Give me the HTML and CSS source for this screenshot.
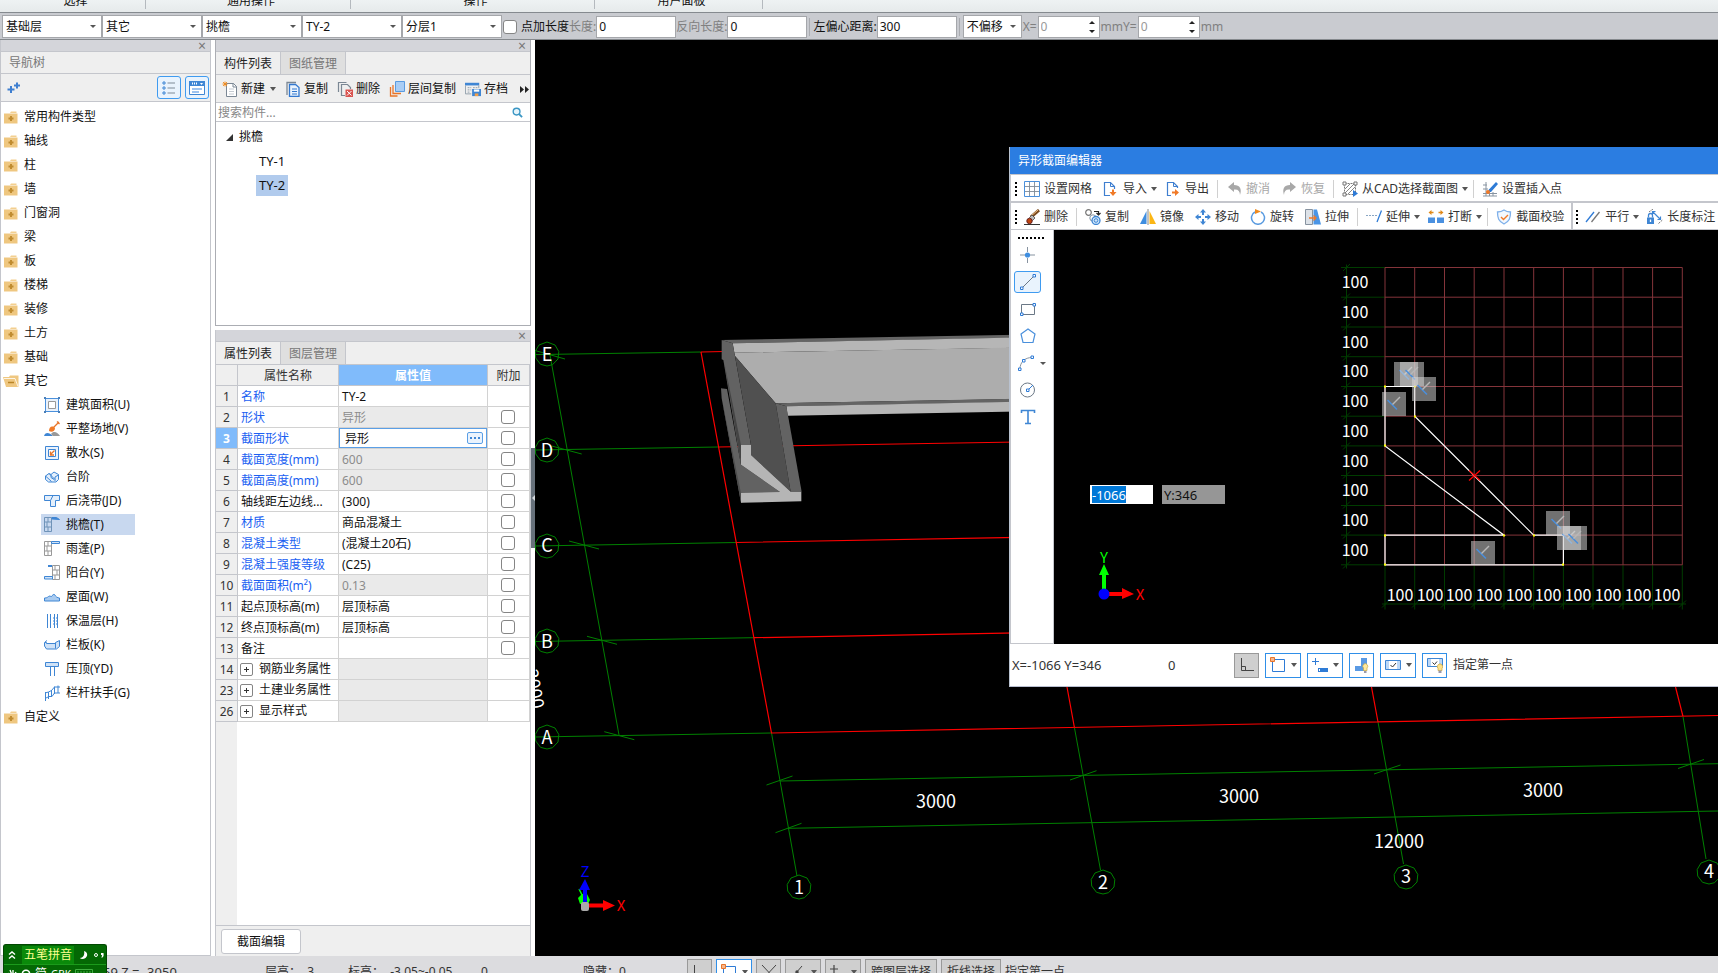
FILE: index.html
```html
<!DOCTYPE html>
<html lang="zh-CN">
<head>
<meta charset="utf-8">
<title>异形截面编辑器</title>
<link rel="stylesheet" href="styles.css">
</head>
<body>
<svg class="sprite" aria-hidden="true">
  <symbol id="folder" viewBox="0 0 16 16"><path d="M8 2.500h5.500v1.500H7z" fill="#f3cf8f"/><path d="M1 4.500h13.500v10H1z" fill="#efc780"/><path d="M8 7v5M5.500 9.500h5" stroke="#c08c30" stroke-width="2"/></symbol>
  <symbol id="folder-open" viewBox="0 0 16 16"><path d="M0 4h6l1-1.500h8.500V14H3z" fill="#efc780"/><path d="M1 5.500h11l3 8" fill="none" stroke="#fff" stroke-width=".8"/><path d="M5 9.500h6" stroke="#b98427" stroke-width="1.500"/></symbol>
  <symbol id="area" viewBox="0 0 16 16"><path d="M1.500 1.500h13v13h-13z" fill="#eaf2fc" stroke="#4a90dc"/><path d="M4.500 4.500h7v7h-7z" fill="#fff" stroke="#999"/><path d="M0 0h2v2H0zM14 0h2v2h-2zM0 14h2v2H0zM14 14h2v2h-2z" fill="#4a7fb8"/></symbol>
  <symbol id="ground" viewBox="0 0 16 16"><path d="M9 7l6-6M13 .500l2.500 2.500" stroke="#e8752a" stroke-width="1.300"/><path d="M5 10c0-4 3-6 6-3 0 3-3 5-6 3z" fill="#f07a28"/><path d="M0 15c1-4 5-4 9 0z" fill="#3f86d4"/><path d="M7 13c3-4 7-1 9 2H9z" fill="#999"/></symbol>
  <symbol id="apron" viewBox="0 0 16 16"><path d="M1.500 1.500h13v13h-13z" fill="#eaf2fc" stroke="#3f86d4"/><path d="M4.500 4.500h7v7h-7z" fill="#fff" stroke="#3f86d4"/><path d="M10.500 5.500L6.500 9.500M6.500 6.500v3.500H10" fill="none" stroke="#e8752a" stroke-width="1.300"/></symbol>
  <symbol id="steps" viewBox="0 0 16 16"><path d="M1.500 7l3.500-2.500 2 1L10 3l4.500 2.500v5L12 13H4.500l-3-2.500z" fill="#e4effb" stroke="#3f86d4"/><path d="M1.500 7l6 5.500M5 4.500l6 6M7 5.500v3l3 2M14.500 6L11 8v4" fill="none" stroke="#3f86d4"/></symbol>
  <symbol id="belt" viewBox="0 0 16 16"><path d="M.500 2.500h15v5h-4v6h-5v-6h-6z" fill="#e4effb" stroke="#3f86d4"/><path d="M9 2.500l-2.500 5" stroke="#3f86d4"/></symbol>
  <symbol id="eave" viewBox="0 0 16 16"><path d="M.500.500h7v14h-7zM4 1v4M1 5h6M3 5v5M1 10h6M4 10v5" fill="none" stroke="#6f93b8"/><path d="M8 .500h4.500l3 2L8 2z" fill="#3f86d4" stroke="#3f86d4"/></symbol>
  <symbol id="canopy" viewBox="0 0 16 16"><path d="M.500.500h7v14h-7zM4 1v4M1 5h6M3 5v5M1 10h6M4 10v5" fill="none" stroke="#999"/><path d="M7.500.500h8v2h-8z" fill="#d2e4f8" stroke="#3f86d4"/></symbol>
  <symbol id="balcony" viewBox="0 0 16 16"><path d="M8.500.500h7v14h-7zM11 1v4M8 5h7M13 5v5M8 10h7M11 10v5" fill="none" stroke="#999"/><path d="M4 0h4v2H4z" fill="#3f86d4"/><path d="M.500 11.500h8v2.500h-8z" fill="#d2e4f8" stroke="#3f86d4"/></symbol>
  <symbol id="roof" viewBox="0 0 16 16"><path d="M.500 12v-3c3 0 3-1 4-1.500 1-1 2 0 3 0 1-1.500 2-2.500 3-2 1 2 3 3.500 5 3.500v3z" fill="#a9cbf0" stroke="#3f86d4"/></symbol>
  <symbol id="insul" viewBox="0 0 16 16"><path d="M3.500 1v14M6.500 1v14M10.500 1v14M13.500 1v14" stroke="#3f86d4"/><path d="M3 5h11M3 8h11M3 11h11" stroke="#3f86d4" stroke-dasharray="1 2"/></symbol>
  <symbol id="slab" viewBox="0 0 16 16"><path d="M.500 5.500h2v1h9v-1l4-2v6l-3 2.500H2.500L.500 9z" fill="#cfe2f7" stroke="#3f86d4"/><path d="M11.500 6v5.500M1 5l2-1.500" stroke="#3f86d4"/></symbol>
  <symbol id="coping" viewBox="0 0 16 16"><path d="M1.500 1.500h13v4h-13z" fill="#cfe2f7" stroke="#3f86d4"/><path d="M6.500 5.500V15M10.500 5.500V15" stroke="#3f86d4"/></symbol>
  <symbol id="rail" viewBox="0 0 16 16"><path d="M1.500 16V7M4.500 14V7M7.500 12V5M10.500 9V1.500M14 8V.500M1 8l3.500-1 3-1.500 3-3.500H16M1 13.500l4-2h3L10.500 8H16" fill="none" stroke="#3f86d4"/></symbol>
  <symbol id="new" viewBox="0 0 16 16"><path d="M4.500 2.500h7l3 3v10h-10z" fill="#fff" stroke="#7b8794"/><path d="M11 2v4h4" fill="none" stroke="#7b8794"/><path d="M7 8h5M7 10.500h5M7 13h5" stroke="#c5cbd2"/><path d="M3 .500v5M.500 3h5M1 1l4 4M5 1L1 5" stroke="#f08a1c" stroke-width=".9"/></symbol>
  <symbol id="copy" viewBox="0 0 16 16"><path d="M2 14V1.500h9" fill="none" stroke="#7b8794" stroke-width="1.300"/><path d="M4.500 3.500h6l3.500 3v9H4.500z" fill="#eaf3fd" stroke="#3378cf" stroke-width="1.300"/><path d="M7 8h5M7 10.500h5M7 13h5" stroke="#3378cf"/></symbol>
  <symbol id="del" viewBox="0 0 16 16"><path d="M1.500 11V1.500h8M8 14.500H4.500v-11h6l3 3V8" fill="none" stroke="#7b8794" stroke-width="1.200"/><path d="M8.500 8.500H16V16H8.500z" fill="#d9534f"/><path d="M10 10l4.500 4.500M14.500 10L10 14.500" stroke="#fff"/></symbol>
  <symbol id="layers" viewBox="0 0 16 16"><path d="M1.500 6v9h7M4 4v8.500h8" fill="none" stroke="#e8752a" stroke-width="1.300"/><path d="M6.500.500h9v10h-9z" fill="#a9cdf5" stroke="#5a9be0"/></symbol>
  <symbol id="save" viewBox="0 0 18 16"><path d="M0 1h16v3H0z" fill="#3f86d4"/><path d="M.500 4v9.500H7M15.500 4v3" fill="none" stroke="#8a98a6"/><path d="M3 6.500h4M3 9h4M3 11.500h3M9 6.500h5" stroke="#8a98a6" stroke-dasharray="2 1"/><path d="M8 8h10v8H8z" fill="#3f86d4"/><path d="M10 8.500h6V11h-6z" fill="#fff"/><path d="M11 13h4v3h-4z" fill="#f3a04a"/></symbol>
  <symbol id="grid" viewBox="0 0 16 16"><path d="M.500.500h15v15H.500z" fill="#fff" stroke="#4a90dc"/><path d="M5.500 1v14M10.500 1v14M1 5.500h14M1 10.500h14" stroke="#7f8b97" stroke-width=".9"/></symbol>
  <symbol id="import" viewBox="0 0 16 16"><path d="M7 14.500H1.500v-13h6l4 4V8" fill="none" stroke="#3f7fd0" stroke-width="1.200"/><path d="M7.500 1.500v4h4" fill="none" stroke="#3f7fd0"/><path d="M9 8.500h2V11h2.500L10 15l-3.500-4H9z" fill="#f07a28"/></symbol>
  <symbol id="export" viewBox="0 0 16 16"><path d="M6 14.500H2.500v-13h6l4 4V7" fill="none" stroke="#3f7fd0" stroke-width="1.200"/><path d="M8.500 1.500v4h4" fill="none" stroke="#3f7fd0"/><path d="M7 10.500h3V8l4 3.500-4 3.500v-2.500H7z" fill="#f07a28"/></symbol>
  <symbol id="undo" viewBox="0 0 16 16"><path d="M2 6l6-5v3c6 0 8 4 6 10 0-4-2-6-6-5.500V11z" fill="#a8a8a8"/></symbol>
  <symbol id="redo" viewBox="0 0 16 16"><path d="M15 6L9 1v3C3 4 1 8 3 14c0-4 2-6 6-5.500V11z" fill="#a8a8a8"/></symbol>
  <symbol id="cad" viewBox="0 0 16 16"><path d="M2.500 2.500h11v11h-11z" fill="none" stroke="#777" stroke-dasharray="2 1"/><path d="M3 8l5-5M3 12l9-9M6 13l7-7" stroke="#888"/><path d="M1 1h3v3H1zM12 1h3v3h-3zM1 12h3v3H1z" fill="#fff" stroke="#777"/><path d="M11 9l5 3.500L11 16z" fill="#2e7bd6"/></symbol>
  <symbol id="insert" viewBox="0 0 16 16"><path d="M4 1v14M7.500 8v7M11 11v4M1 4h4M1 8h5M1 12.500h14M1 15h14" stroke="#8793a0"/><path d="M14 1l2 2-7 8H6.500V9z" fill="#2e7bd6"/><circle cx="6" cy="11" r="2" fill="#f07a28"/></symbol>
  <symbol id="erase" viewBox="0 0 16 16"><path d="M0 15.500h16" stroke="#333"/><path d="M15 1L7 8" stroke="#7a4a20" stroke-width="3"/><path d="M14 1L7 7" stroke="#f2c38a"/><path d="M8 6l3 3-2.500 2.500-3-3z" fill="#bbb" stroke="#333" stroke-width=".7"/><circle cx="5.500" cy="12" r="2.700" fill="#c1440e" stroke="#622"/></symbol>
  <symbol id="copy2" viewBox="0 0 16 16"><circle cx="3.500" cy="3.500" r="2.800" fill="none" stroke="#777" stroke-width="1.200"/><circle cx="8" cy="9" r="3.200" fill="#fff" stroke="#8795a3"/><circle cx="11" cy="11.500" r="4" fill="#cfe6fa" stroke="#3f86d4" stroke-width="1.300"/><circle cx="11" cy="11.500" r="1.800" fill="none" stroke="#3f86d4"/><path d="M9 2.500h4.500V6M11.500 4l2 2 2-2" fill="none" stroke="#222" stroke-width="1.200"/></symbol>
  <symbol id="mirror" viewBox="0 0 16 16"><path d="M6.500 2v13H0z" fill="#3f8ee0"/><path d="M9.500 2v13H16z" fill="#fbb615"/><path d="M8 0v16" stroke="#888"/></symbol>
  <symbol id="move" viewBox="0 0 16 16"><path d="M8 0l3 3.500H9V6H7V3.500H5zM8 16l3-3.500H9V10H7v2.500H5zM0 8l3.500-3v2H6v2H3.500v2zM16 8l-3.500-3v2H10v2h2.500v2z" fill="#3f86d4"/></symbol>
  <symbol id="rotate" viewBox="0 0 16 16"><path d="M5 3a6.500 6.500 0 1 0 6 0" fill="none" stroke="#5a9be0" stroke-width="1.500"/><path d="M5 0l6 2.500L5 5z" fill="#f08a1c"/></symbol>
  <symbol id="stretch" viewBox="0 0 16 16"><path d="M.500.500h7v15h-7z" fill="#dde2e8" stroke="#8793a0"/><path d="M8.500.500h3.500l4 15H8.500z" fill="#4a95e6"/><path d="M4 9h7M8.500 6.500L11 9l-2.500 2.500" fill="none" stroke="#f07a28" stroke-width="1.300"/></symbol>
  <symbol id="extend" viewBox="0 0 16 16"><path d="M0 6.500h11" stroke="#8aa6c4" stroke-width="1.200" stroke-dasharray="2 1"/><path d="M15.500 1.500L11 13" stroke="#2e7bd6" stroke-width="1.300"/></symbol>
  <symbol id="break" viewBox="0 0 16 16"><path d="M0 8.500h7V14H0zM9 8.500h7V14H9z" fill="#4a90e0"/><path d="M.500 3.500l3-2.500v5zM15.500 3.500L12.500 1v5z" fill="#e08a1a"/><path d="M3 3.500h2.500M10.500 3.500H13" stroke="#e08a1a" stroke-width="1.500"/></symbol>
  <symbol id="shield" viewBox="0 0 16 16"><path d="M8 1c2 1.500 4 2 6.500 2 0 6-1 9.500-6.500 12C2.500 12.500 1.500 9 1.500 3 4 3 6 2.500 8 1z" fill="#f3f8fe" stroke="#7eb0ea" stroke-width="1.300"/><path d="M5 8l2.500 2.500L12 6" fill="none" stroke="#f07a28" stroke-width="1.400"/></symbol>
  <symbol id="parallel" viewBox="0 0 16 16"><path d="M1 13L9 3" stroke="#2e7bd6" stroke-width="1.300"/><path d="M6.500 13l8-10" stroke="#777" stroke-width="1.300"/></symbol>
  <symbol id="dim" viewBox="0 0 16 16"><path d="M0 8.500h7V15H0z" fill="#3f86d4"/><path d="M1.500 8.500v-2a2 2 0 0 1 4 0v2" fill="none" stroke="#3f86d4" stroke-width="1.300"/><path d="M3.500 10.500V13" stroke="#fff" stroke-width="1.300"/><path d="M2 3l4-3M11.500 14.500l4.500-4" stroke="#777" stroke-dasharray="2 1"/><path d="M6 3l7 7M5.500 5.500v-3h3M13.500 7.500v3h-3" fill="none" stroke="#3f86d4" stroke-width="1.200"/></symbol>
  <symbol id="t-point" viewBox="0 0 16 16"><path d="M7.500 0v5M7.500 11v5M0 8h5M10 8h5" stroke="#8793a0"/><circle cx="7.500" cy="8" r="2.600" fill="#3f8ee0"/></symbol>
  <symbol id="t-line" viewBox="0 0 16 16"><path d="M2.500 13.500l11-11" stroke="#6b7886"/><path d="M.500 13h2.500v2.500H.500zM13 .500h2.500V3H13z" fill="#fff" stroke="#2e7bd6"/></symbol>
  <symbol id="t-rect" viewBox="0 0 16 16"><path d="M1.500 3.500h13v10h-13z" fill="none" stroke="#6b7886"/><path d="M.500 12h2.500v2.500H.500zM13 2.500h2.500V5H13z" fill="#fff" stroke="#2e7bd6"/></symbol>
  <symbol id="t-poly" viewBox="0 0 16 16"><path d="M8 1l7 5-2 8.500H3L1 6z" fill="none" stroke="#4a90dc" stroke-width="1.200"/></symbol>
  <symbol id="t-arc" viewBox="0 0 16 16"><path d="M2 14C2 7 7 2.500 14 2.500" fill="none" stroke="#8793a0"/><path d="M.500 13h2.500v2.500H.500zM13 1h2.500v2.500H13zM4.500 4.500H7V7H4.500z" fill="#fff" stroke="#2e7bd6"/></symbol>
  <symbol id="t-circle" viewBox="0 0 16 16"><circle cx="7.500" cy="8" r="7" fill="none" stroke="#6b7886"/><path d="M8 8l5-5" stroke="#2e7bd6"/><path d="M6.500 7h2.500v2.500H6.500z" fill="#fff" stroke="#2e7bd6"/></symbol>
  <symbol id="t-text" viewBox="0 0 16 16"><path d="M1.500 4V1.500h13V4M8 2v12.500M5 14.500h6" fill="none" stroke="#3f86d4" stroke-width="1.600"/></symbol>
  <symbol id="s-ortho" viewBox="0 0 16 16"><path d="M2.500 1v12.500H15M2.500 9.500h4v4" fill="none" stroke="#444"/></symbol>
  <symbol id="s-snap" viewBox="0 0 16 16"><path d="M2.500 2.500h12v12h-12z" fill="none" stroke="#2e7bd6"/><path d="M.500.500h4v4h-4z" fill="#f6b58a" stroke="#e8752a"/></symbol>
  <symbol id="s-off" viewBox="0 0 16 16"><path d="M3.500 1v7M0 4.500h7" stroke="#2e7bd6"/><path d="M6 11h10v4H6z" fill="#2e7bd6"/><path d="M7 12h1v2H7z" fill="#fff"/></symbol>
  <symbol id="s-bulb" viewBox="0 0 16 16"><path d="M1 9h6V1h6v6h-3v7H1z" fill="#5a9ae4"/><path d="M9.500 11a2.500 2.500 0 1 1 3.500 0v2.500H9.500z" fill="#ffe9a0" stroke="#caa63a" stroke-width=".7"/><path d="M10 14h2.500v2H10z" fill="#99a"/></symbol>
  <symbol id="s-check" viewBox="0 0 16 16"><path d="M.500 3.500h15v9H.500z" fill="#bcd8f7" stroke="#3f86d4"/><path d="M4 4h8v8H4z" fill="#fff"/><path d="M5.500 8l2 2L11 6" fill="none" stroke="#333"/></symbol>
  <symbol id="s-checkb" viewBox="0 0 16 16"><path d="M.500 1.500h15v8H.500z" fill="#bcd8f7" stroke="#3f86d4"/><path d="M4 2h8v7H4z" fill="#fff"/><path d="M5.500 5.500l2 2L10 4.500" fill="none" stroke="#333"/><path d="M11 11.500a2.700 2.700 0 1 1 4 0v2h-4z" fill="#ffe28a" stroke="#caa63a" stroke-width=".7"/><path d="M11.500 13.500h3V16h-3z" fill="#99a"/></symbol>
  <symbol id="s-cross" viewBox="0 0 16 16"><path d="M1 1l7 7.500L15 1M3 15l5-6.500 5 6.500" fill="none" stroke="#444"/></symbol>
  <symbol id="s-brush" viewBox="0 0 16 16"><path d="M2 15l4-6 6-7" fill="none" stroke="#444"/><circle cx="7" cy="8" r="1.700" fill="#444"/></symbol>
  <symbol id="s-plus" viewBox="0 0 16 16"><path d="M4 1v8M0 5h8" stroke="#444" stroke-width="1.200"/></symbol>
  <symbol id="decagon" viewBox="-13 -13 26 26"><path d="M0-12L8-9 11.800-2.500 11 5 5.500 10.700 0 12-6.500 10.300-11.300 4-11.800-2.500-8-9z" fill="none" stroke="#008000"/></symbol>
  <symbol id="perp" viewBox="0 0 24 24"><path d="M0 0h24v24H0z" fill="#d8d8d8" fill-opacity=".52"/><path d="M5.500 8l9.500 9.500" stroke="#4a8fdc" stroke-width="1.500"/><path d="M10.500 12.500L18 5" stroke="#b8b8b8" stroke-width="1.500"/></symbol>
</svg>

<div class="app">
  <header class="ribbon">
    <span class="ribbon-group g1">选择</span><span class="ribbon-group g2">通用操作</span><span class="ribbon-group g3">操作</span><span class="ribbon-group g4">用户面板</span>
  </header>

  <div class="options">
    <span class="combo"><select aria-label="楼层"><option>基础层</option></select></span>
    <span class="combo"><select aria-label="类别"><option>其它</option></select></span>
    <span class="combo"><select aria-label="构件类型"><option>挑檐</option></select></span>
    <span class="combo"><select aria-label="构件"><option>TY-2</option></select></span>
    <span class="combo"><select aria-label="分层"><option>分层1</option></select></span>
    <label class="opt-check"><input class="box" type="checkbox">点加长度</label>
    <label class="dim-label" for="len">长度:</label><input class="field" id="len" value="0">
    <label class="dim-label" for="rlen">反向长度:</label><input class="field" id="rlen" value="0">
    <i class="opt-sep"></i>
    <label for="ecc">左偏心距离:</label><input class="field" id="ecc" value="300">
    <i class="opt-sep"></i>
    <span class="combo combo-small"><select aria-label="偏移"><option>不偏移</option></select></span>
    <label class="dim-label unit" for="ox">X=</label><span class="spin"><input id="ox" type="number" value="0" disabled></span>
    <label class="dim-label unit" for="oy">mmY=</label><span class="spin"><input id="oy" type="number" value="0" disabled></span>
    <span class="dim-label unit">mm</span>
  </div>

  <main class="work">
    <aside class="nav">
      <div class="strip"><button class="close" aria-label="关闭导航树">×</button></div>
      <h2 class="nav-title">导航树</h2>
      <div class="nav-tools">
        <button class="plain" aria-label="展开"><svg class="ic" viewBox="0 0 16 16"><path d="M5 6v7M1.500 9.500h7M11 2.500v6M8 5.500h6" stroke="#3f7fd0" stroke-width="2"/></svg></button>
        <button class="view" aria-label="列表"><svg class="ic" viewBox="0 0 16 16"><path d="M2 2h2v2H2zM2 7h2v2H2zM2 12h2v2H2z" fill="none" stroke="#3f86d4"/><path d="M6.500 3H14M6.500 8H14M6.500 13H14" stroke="#7f8b97"/></svg></button>
        <button class="view" aria-label="面板"><svg class="ic" viewBox="0 0 16 16"><path d="M.500 1.500h15v13H.500z" fill="#fff" stroke="#3f86d4"/><path d="M0 1h16v5H0z" fill="#3f86d4"/><path d="M3 3.500h6" stroke="#fff" stroke-width="2" stroke-dasharray="1 1"/><path d="M11 3h3l-1.500 2z" fill="#fff"/><path d="M3 9h10M3 12h7" stroke="#7fb0ea" stroke-width="1.500"/></svg></button>
      </div>
      <ul class="tree">
        <li><svg class="ic"><use href="#folder"/></svg>常用构件类型</li>
        <li><svg class="ic"><use href="#folder"/></svg>轴线</li>
        <li><svg class="ic"><use href="#folder"/></svg>柱</li>
        <li><svg class="ic"><use href="#folder"/></svg>墙</li>
        <li><svg class="ic"><use href="#folder"/></svg>门窗洞</li>
        <li><svg class="ic"><use href="#folder"/></svg>梁</li>
        <li><svg class="ic"><use href="#folder"/></svg>板</li>
        <li><svg class="ic"><use href="#folder"/></svg>楼梯</li>
        <li><svg class="ic"><use href="#folder"/></svg>装修</li>
        <li><svg class="ic"><use href="#folder"/></svg>土方</li>
        <li><svg class="ic"><use href="#folder"/></svg>基础</li>
        <li><svg class="ic"><use href="#folder-open"/></svg>其它</li>
        <li class="child"><svg class="ic"><use href="#area"/></svg>建筑面积(U)</li>
        <li class="child"><svg class="ic"><use href="#ground"/></svg>平整场地(V)</li>
        <li class="child"><svg class="ic"><use href="#apron"/></svg>散水(S)</li>
        <li class="child"><svg class="ic"><use href="#steps"/></svg>台阶</li>
        <li class="child"><svg class="ic"><use href="#belt"/></svg>后浇带(JD)</li>
        <li class="child current"><svg class="ic"><use href="#eave"/></svg>挑檐(T)</li>
        <li class="child"><svg class="ic"><use href="#canopy"/></svg>雨蓬(P)</li>
        <li class="child"><svg class="ic"><use href="#balcony"/></svg>阳台(Y)</li>
        <li class="child"><svg class="ic"><use href="#roof"/></svg>屋面(W)</li>
        <li class="child"><svg class="ic"><use href="#insul"/></svg>保温层(H)</li>
        <li class="child"><svg class="ic"><use href="#slab"/></svg>栏板(K)</li>
        <li class="child"><svg class="ic"><use href="#coping"/></svg>压顶(YD)</li>
        <li class="child"><svg class="ic"><use href="#rail"/></svg>栏杆扶手(G)</li>
        <li><svg class="ic"><use href="#folder"/></svg>自定义</li>
      </ul>
    </aside>

    <div class="middle">
      <section class="pane parts">
        <div class="strip"><button class="close" aria-label="关闭构件列表">×</button></div>
        <div class="tabs"><button class="tab on">构件列表</button><button class="tab">图纸管理</button></div>
        <div class="part-tools">
          <button><svg class="ic"><use href="#new"/></svg>新建<i class="caret"></i></button>
          <button><svg class="ic"><use href="#copy"/></svg>复制</button>
          <button><svg class="ic"><use href="#del"/></svg>删除</button>
          <button><svg class="ic"><use href="#layers"/></svg>层间复制</button>
          <button><svg class="ic"><use href="#save"/></svg>存档</button>
          <button class="more" aria-label="更多"><svg viewBox="0 0 9 7"><path d="M0 0l4 3.500L0 7zM5 0l4 3.500L5 7z" fill="#222"/></svg></button>
        </div>
        <div class="search"><input aria-label="搜索构件" placeholder="搜索构件..."><svg class="lens" viewBox="0 0 12 12"><circle cx="5" cy="5" r="3.700" fill="#e6f4fb" stroke="#3a96c4" stroke-width="1.500"/><path d="M7.500 7.500L11 11" stroke="#3a96c4" stroke-width="2"/></svg></div>
        <ul class="part-tree">
          <li><svg class="tri" viewBox="0 0 7 7"><path d="M7 0v7H0z" fill="#333"/></svg>挑檐</li>
          <li class="leaf"><span>TY-1</span></li>
          <li class="leaf"><span class="picked">TY-2</span></li>
        </ul>
      </section>

      <section class="pane props">
        <div class="strip"><button class="close" aria-label="关闭属性列表">×</button></div>
        <div class="tabs"><button class="tab on">属性列表</button><button class="tab">图层管理</button></div>
        <div class="prop-body">
          <table>
            <thead><tr><th class="c-no"></th><th class="c-name">属性名称</th><th class="c-val">属性值</th><th class="c-add">附加</th></tr></thead>
            <tbody>
              <tr><th>1</th><td class="link">名称</td><td>TY-2</td><td></td></tr>
              <tr><th>2</th><td class="link">形状</td><td class="off">异形</td><td class="tick"><input class="box" type="checkbox" aria-label="附加 形状"></td></tr>
              <tr class="active"><th>3</th><td class="link">截面形状</td><td class="edit"><div class="editor"><input value="异形" aria-label="截面形状"><button aria-label="编辑截面"><i></i><i></i><i></i></button></div></td><td class="tick"><input class="box" type="checkbox" aria-label="附加 截面形状"></td></tr>
              <tr><th>4</th><td class="link">截面宽度(mm)</td><td class="off">600</td><td class="tick"><input class="box" type="checkbox" aria-label="附加 截面宽度"></td></tr>
              <tr><th>5</th><td class="link">截面高度(mm)</td><td class="off">600</td><td class="tick"><input class="box" type="checkbox" aria-label="附加 截面高度"></td></tr>
              <tr><th>6</th><td>轴线距左边线...</td><td>(300)</td><td class="tick"><input class="box" type="checkbox" aria-label="附加 轴线距左边线"></td></tr>
              <tr><th>7</th><td class="link">材质</td><td>商品混凝土</td><td class="tick"><input class="box" type="checkbox" aria-label="附加 材质"></td></tr>
              <tr><th>8</th><td class="link">混凝土类型</td><td>(混凝土20石)</td><td class="tick"><input class="box" type="checkbox" aria-label="附加 混凝土类型"></td></tr>
              <tr><th>9</th><td class="link">混凝土强度等级</td><td>(C25)</td><td class="tick"><input class="box" type="checkbox" aria-label="附加 混凝土强度等级"></td></tr>
              <tr><th>10</th><td class="link">截面面积(m²)</td><td class="off">0.13</td><td class="tick"><input class="box" type="checkbox" aria-label="附加 截面面积"></td></tr>
              <tr><th>11</th><td>起点顶标高(m)</td><td>层顶标高</td><td class="tick"><input class="box" type="checkbox" aria-label="附加 起点顶标高"></td></tr>
              <tr><th>12</th><td>终点顶标高(m)</td><td>层顶标高</td><td class="tick"><input class="box" type="checkbox" aria-label="附加 终点顶标高"></td></tr>
              <tr><th>13</th><td>备注</td><td></td><td class="tick"><input class="box" type="checkbox" aria-label="附加 备注"></td></tr>
              <tr><th>14</th><td class="group"><button class="exp" aria-label="展开钢筋业务属性"></button>钢筋业务属性</td><td class="off"></td><td></td></tr>
              <tr><th>23</th><td class="group"><button class="exp" aria-label="展开土建业务属性"></button>土建业务属性</td><td class="off"></td><td></td></tr>
              <tr><th>26</th><td class="group"><button class="exp" aria-label="展开显示样式"></button>显示样式</td><td class="off"></td><td></td></tr>
            </tbody>
          </table>
        </div>
        <div class="prop-foot"><button>截面编辑</button></div>
      </section>
    </div>

    <div class="splitter"><button aria-label="折叠面板"><svg viewBox="0 0 3 6"><path d="M3 0v6L0 3z" fill="#d5d9dd"/></svg></button></div>

    <section class="viewport">
      <svg class="scene" viewBox="535 40 1183 916" preserveAspectRatio="xMinYMin slice">
        <g fill="none" stroke="#008000">
          <path d="M535 354.600L701 352M535 450l183-3M535 546l201-3.500M535 641.500l218.500-3.800M535 737l236.500-4"/>
          <path d="M550 355l69 380M535 350.500l30 8.500M551.700 446l30 8M569 541l30 8M587 636.300l30 8M604.300 731.700l30 8"/>
          <path d="M771.500 733L797 876M1074.500 728l26 142M1378 722l25.500 142M1683 716.500L1706 859"/>
          <path d="M780 781l938-17.300M789 828.300L1718 811"/>
          <path d="M766.500 785l26-9M1070 780l26.500-9.300M1374 774l26.500-9M1678 768.500l26-9M775.500 832.700l26-9.400"/>
        </g>
        <path d="M701 352l70.500 381L1718 715.500M701 352l23-.5M718 447l360-6M736 542.500l300-5.500M753.500 637.700L1040 632.500M1067 687l7.500 41M1371.500 687l6.500 35M1675.500 687l7.500 29.500" fill="none" stroke="#f00" stroke-width="1.200"/>
        <g transform="translate(525 320) scale(.33333)">
          <path d="M590 60L1500 44v9L623 70z" fill="#646464"/>
          <path d="M623 70L1500 52v31L628 98z" fill="#b6b6b6"/>
          <path d="M628 98L1500 82v155L752 250 630 108z" fill="#adadad"/>
          <path d="M752 250L1500 236v10L784 259z" fill="#646464"/>
          <path d="M784 259L1500 245v29L788 287z" fill="#b6b6b6"/>
          <path d="M590 60l33 10 55 305h-30v60L595 120l-5-2z" fill="#626262"/>
          <path d="M597 124l51 251v55z" fill="#444"/>
          <path d="M588 205l18 2 42 227 117 82-117 32-58-313z" fill="#626262"/>
          <path d="M590 235l58 285v28z" fill="#4c4c4c"/>
          <path d="M630 108l122 142 45 265-119-110v-30z" fill="#505050"/>
          <path d="M752 250l32 9 46 256h-33z" fill="#636363"/>
          <path d="M648 375h30v30l119 110h32v29l-181 4v-29l117-3-117-82z" fill="#b5b5b5"/>
        </g>
        <use href="#decagon" x="534" y="341" width="26" height="26"/><use href="#decagon" x="534" y="437" width="26" height="26"/><use href="#decagon" x="534" y="533" width="26" height="26"/><use href="#decagon" x="534" y="628" width="26" height="26"/><use href="#decagon" x="534" y="724" width="26" height="26"/>
        <use href="#decagon" x="786" y="874" width="26" height="26"/><use href="#decagon" x="1090" y="869" width="26" height="26"/><use href="#decagon" x="1393" y="864" width="26" height="26"/><use href="#decagon" x="1696" y="859" width="26" height="26"/>
        <g class="cad-text big">
          <text x="547" y="361">E</text><text x="547" y="457">D</text><text x="547" y="552">C</text><text x="547" y="648">B</text><text x="547" y="744">A</text>
          <text x="799" y="894">1</text><text x="1103" y="889">2</text><text x="1406" y="883">3</text><text x="1709" y="878">4</text>
          <text x="936" y="808">3000</text><text x="1239" y="803">3000</text><text x="1543" y="797">3000</text><text x="1399" y="848">12000</text>
          <text transform="translate(528 690) rotate(80)">3000</text>
        </g>
        <path d="M578 898l4-4h5l3 6-2 4h-8z" fill="#0f0"/><path d="M579 889l3 6v5" fill="none" stroke="#0f0" stroke-width="1.500"/><path d="M583 903v-13h-4l6-11 5 11h-3v13z" fill="#00f"/><path d="M589 903.500h14V900l12 5.500-12 5.500v-3.500h-14z" fill="red"/><rect x="581" y="902" width="8" height="9" rx="2" fill="#aaa"/>
        <g class="cad-text axis"><text x="585" y="877" fill="#00f">Z</text><text x="621" y="911" fill="#f00">X</text></g>
      </svg>

      <section class="dialog" role="dialog" aria-label="异形截面编辑器">
        <h2 class="dlg-title">异形截面编辑器</h2>
        <div class="bar">
          <i class="grip"></i>
          <button><svg class="ic"><use href="#grid"/></svg>设置网格</button>
          <button><svg class="ic"><use href="#import"/></svg>导入<i class="caret"></i></button>
          <button><svg class="ic"><use href="#export"/></svg>导出</button>
          <i class="sep"></i>
          <button disabled><svg class="ic"><use href="#undo"/></svg>撤消</button>
          <button disabled><svg class="ic"><use href="#redo"/></svg>恢复</button>
          <i class="sep"></i>
          <button><svg class="ic"><use href="#cad"/></svg>从CAD选择截面图<i class="caret"></i></button>
          <i class="sep"></i>
          <button><svg class="ic"><use href="#insert"/></svg>设置插入点</button>
        </div>
        <div class="bar">
          <i class="grip"></i>
          <button><svg class="ic"><use href="#erase"/></svg>删除</button>
          <i class="sep"></i>
          <button><svg class="ic"><use href="#copy2"/></svg>复制</button>
          <button><svg class="ic"><use href="#mirror"/></svg>镜像</button>
          <button><svg class="ic"><use href="#move"/></svg>移动</button>
          <button><svg class="ic"><use href="#rotate"/></svg>旋转</button>
          <button><svg class="ic"><use href="#stretch"/></svg>拉伸</button>
          <i class="sep"></i>
          <button><svg class="ic"><use href="#extend"/></svg>延伸<i class="caret"></i></button>
          <button><svg class="ic"><use href="#break"/></svg>打断<i class="caret"></i></button>
          <i class="sep"></i>
          <button><svg class="ic"><use href="#shield"/></svg>截面校验</button>
          <i class="bar-end"></i>
          <i class="grip"></i>
          <button><svg class="ic"><use href="#parallel"/></svg>平行<i class="caret"></i></button>
          <button><svg class="ic"><use href="#dim"/></svg>长度标注</button>
        </div>
        <div class="dlg-body">
          <div class="tools">
            <i class="grip-h"></i>
            <button aria-label="点"><svg class="ic"><use href="#t-point"/></svg></button>
            <button class="on" aria-label="直线"><svg class="ic"><use href="#t-line"/></svg></button>
            <button aria-label="矩形"><svg class="ic"><use href="#t-rect"/></svg></button>
            <button aria-label="多边形"><svg class="ic"><use href="#t-poly"/></svg></button>
            <button class="wide" aria-label="弧"><svg class="ic"><use href="#t-arc"/></svg><i class="caret"></i></button>
            <button aria-label="圆"><svg class="ic"><use href="#t-circle"/></svg></button>
            <button aria-label="文字"><svg class="ic"><use href="#t-text"/></svg></button>
          </div>
          <div class="sketch">
            <svg class="scene" viewBox="1054 230 664 414" preserveAspectRatio="xMinYMin slice">
              <g transform="translate(1385 267.500)" fill="none">
                <path d="M-44 0H0M-44 29.700H0M-44 59.500H0M-44 89.200H0M-44 119H0M-44 148.700H0M-44 178.400H0M-44 208H0M-44 238H0M-44 267.600H0M-44 297.300H0M-38.500-3v304M0 297v45M29.700 297v45M59.500 297v45M89.200 297v45M119 297v45M148.700 297v45M178.400 297v45M208 297v45M238 297v45M267.600 297v45M297.300 297v45M-3 336.500h304" stroke="#003c00"/>
                <path d="M-42 3.500l7-7M-42 33l7-7M-42 63l7-7M-42 93l7-7M-42 122l7-7M-42 152l7-7M-42 182l7-7M-42 211l7-7M-42 241l7-7M-42 271l7-7M-42 301l7-7M-3 340l7-7M27 340l7-7M56 340l7-7M86 340l7-7M116 340l7-7M145 340l7-7M175 340l7-7M205 340l7-7M234 340l7-7M264 340l7-7M294 340l7-7" stroke="#003c00"/>
                <path d="M0 0h297.300M0 29.700h297.300M0 59.500h297.300M0 89.200h297.300M0 119h297.300M0 148.700h297.300M0 178.400h297.300M0 208h297.300M0 238h297.300M0 267.600h297.300M0 297.300h297.300M0 0v297.300M29.700 0v297.300M59.500 0v297.300M89.200 0v297.300M119 0v297.300M148.700 0v297.300M178.400 0v297.300M208 0v297.300M238 0v297.300M267.600 0v297.300M297.300 0v297.300" stroke="#84343a"/>
                <path d="M0 119h29.700v29.700l119 119h29.700v29.700H0v-29.700h119L0 178.400z" stroke="#fff" stroke-width="1.200"/>
                <path d="M84 203l11 10M95 203l-11 10" stroke="#f00" stroke-width="1.200"/>
                <path d="M-1 118h2v2h-2zM29 118h2v2h-2zM29 148h2v2h-2zM-1 177h2v2h-2zM-1 267h2v2h-2zM118 267h2v2h-2zM148 267h2v2h-2zM-1 296h2v2h-2zM177 296h2v2h-2z" fill="#ff0"/>
              </g>
              <use href="#perp" x="1394" y="362" width="24" height="24"/><use href="#perp" x="1400" y="362" width="24" height="24"/><use href="#perp" x="1412" y="377" width="24" height="24"/><use href="#perp" x="1382" y="392" width="24" height="24"/><use href="#perp" x="1546" y="511" width="24" height="24"/><use href="#perp" x="1557" y="526" width="24" height="24"/><use href="#perp" x="1563" y="526" width="24" height="24"/><use href="#perp" x="1471" y="541" width="24" height="24"/>
              <g class="cad-text">
                <text x="1355" y="288">100</text><text x="1355" y="318">100</text><text x="1355" y="348">100</text><text x="1355" y="377">100</text><text x="1355" y="407">100</text><text x="1355" y="437">100</text><text x="1355" y="467">100</text><text x="1355" y="496">100</text><text x="1355" y="526">100</text><text x="1355" y="556">100</text>
                <text x="1400" y="601">100</text><text x="1430" y="601">100</text><text x="1459" y="601">100</text><text x="1489" y="601">100</text><text x="1519" y="601">100</text><text x="1548" y="601">100</text><text x="1578" y="601">100</text><text x="1608" y="601">100</text><text x="1638" y="601">100</text><text x="1667" y="601">100</text>
              </g>
              <path d="M1102 593v-18h-3l5-11 5 11h-3v18z" fill="#0f0"/><path d="M1104 592h18v-4l12 6-12 5v-3h-18z" fill="red"/><circle cx="1104" cy="594" r="5.500" fill="#00f"/>
              <g class="cad-text axis"><text x="1104" y="563" fill="#0f0">Y</text><text x="1140" y="600" fill="#f00">X</text></g>
            </svg>
            <div class="coords"><label class="coord-x"><input class="chosen" aria-label="X" value="-1066"></label><input class="coord-y" aria-label="Y" value="Y:346"></div>
          </div>
        </div>
        <footer class="dlg-status">
          <span class="pos">X=-1066 Y=346</span><span class="zero">0</span>
          <button class="pressed" aria-label="正交"><svg class="ic"><use href="#s-ortho"/></svg></button>
          <button aria-label="捕捉"><svg class="ic"><use href="#s-snap"/></svg><i class="caret"></i></button>
          <button aria-label="偏移"><svg class="ic"><use href="#s-off"/></svg><i class="caret"></i></button>
          <button aria-label="提示"><svg class="ic"><use href="#s-bulb"/></svg></button>
          <button aria-label="校验"><svg class="ic"><use href="#s-check"/></svg><i class="caret"></i></button>
          <button aria-label="校验提示"><svg class="ic"><use href="#s-checkb"/></svg></button>
          <span>指定第一点</span>
        </footer>
      </section>
    </section>
  </main>

  <footer class="status">
    <span class="st-pos">59 Z = -3050</span>
    <span class="st-floor">层高：&nbsp; 3</span>
    <span class="st-elev">标高：&nbsp; -3.05~-0.05</span>
    <span class="st-zero">0</span>
    <span class="st-hide">隐藏：0</span>
    <button aria-label="正交"><svg class="ic"><use href="#s-ortho"/></svg></button>
    <button class="on" aria-label="捕捉"><svg class="ic"><use href="#s-snap"/></svg><i class="caret"></i></button>
    <button aria-label="交点"><svg class="ic"><use href="#s-cross"/></svg></button>
    <button aria-label="笔"><svg class="ic"><use href="#s-brush"/></svg><i class="caret"></i></button>
    <button aria-label="加"><svg class="ic"><use href="#s-plus"/></svg><i class="caret"></i></button>
    <button class="txt">跨图层选择</button>
    <button class="txt">折线选择</button>
    <span>指定第一点</span>
  </footer>

  <div class="ime">
    <div class="ime-row">
      <svg class="ime-ic" viewBox="0 0 10 10"><path d="M2 4.500L5 2l3 2.500M2 8.500L5 6l3 2.500" fill="none" stroke="#fff" stroke-width="1.400"/></svg>
      <span class="ime-name">五笔拼音</span>
      <svg class="ime-ic" viewBox="0 0 10 10"><path d="M5 1c5 1 4 8-2 8-1 0-2-1-2-1 3 0 5-3 4-7z" fill="#fff"/></svg>
      <svg class="ime-ic" viewBox="0 0 10 10"><circle cx="2" cy="5" r="1.500" fill="none" stroke="#fff"/><path d="M7 3h2.500c.5 3 0 4-2 5l.5-3H7z" fill="#fff"/></svg>
    </div>
    <div class="ime-row ime-low">
      <svg class="ime-ic" viewBox="0 0 10 10"><path d="M1 4l2 3M3 1l2 5M6 1v5M9 3L7 7M3 6h5v3H4z" fill="#fff" stroke="#fff" stroke-width="1.300"/></svg>
      <svg class="ime-ic" viewBox="0 0 10 10"><circle cx="5" cy="5" r="3.700" fill="none" stroke="#fff" stroke-width="1.500"/></svg>
      <span class="ime-mode">简</span><span class="ime-set">GBK</span>
      <svg class="ime-kb" viewBox="0 0 18 10"><path d="M.500.500h17v9H.500z" fill="none" stroke="#3fae3f"/><path d="M2 3h14M2 5.500h14M2 8h14" stroke="#3fae3f" stroke-dasharray="2 1"/></svg>
    </div>
  </div>
</div>
</body>
</html>
```
FILE: styles.css
```css
* { box-sizing: border-box; }
body { margin: 0; overflow: hidden; font: 12px/16px "Noto Sans", "Noto Sans CJK SC", sans-serif; color: #111; background: #fff; }
button, input, select { font: inherit; color: inherit; }
button { padding: 0; border: 0; background: none; white-space: nowrap; }
ul { list-style: none; margin: 0; padding: 0; }
h2 { margin: 0; font: inherit; }
i { font-style: normal; }
.sprite { display: none; }
.ic { width: 16px; height: 16px; flex: none; display: block; }
.caret { flex: none; width: 0; border: 4px solid transparent; border-top-color: #555; border-bottom: 0; }
.box { appearance: none; width: 14px; height: 14px; margin: 0; flex: none; background: #fff; border: 1px solid #858585; border-radius: 3px; }

.app { position: relative; display: flex; flex-direction: column; height: 100vh; overflow: hidden; }

.ribbon { display: flex; flex: none; height: 13px; background: linear-gradient(#eef2f3, #e6eaeb); border-bottom: 1px solid #858a8f; overflow: hidden; }
.ribbon-group { display: flex; flex: none; justify-content: center; align-items: flex-end; padding-left: 6px; height: 9px; border-right: 1px solid #b4b9be; }
.g1 { width: 146px; }
.g2 { width: 205px; }
.g3 { width: 244px; }
.g4 { width: 168px; }

.options { display: flex; flex: none; align-items: center; height: 27px; padding: 1px 0 0 2px; background: #c9cbd0; border-bottom: 1px solid #85898d; white-space: nowrap; }
.combo { position: relative; flex: none; width: 100px; height: 23px; }
.combo::after { content: ""; position: absolute; right: 6px; top: 10px; border: 3px solid transparent; border-top-color: #555; border-bottom: 0; }
.combo select { appearance: none; width: 100%; height: 100%; padding: 0 3px; border: 1px solid #a5a7ab; border-radius: 0; background: #fff; }
.combo-small { width: 59px; }
.opt-check { display: flex; align-items: center; gap: 4px; margin-left: 1px; }
.dim-label { color: #808080; }
.unit { padding: 0 1px; }
.field { width: 80px; height: 22px; padding: 0 2px; border: 1px solid #a5a7ab; background: #fff; }
.opt-sep { width: 1px; height: 18px; margin: 0 3px 0 2px; background: #a9abb0; }
.spin { position: relative; width: 62px; height: 22px; flex: none; }
.spin input { appearance: textfield; width: 100%; height: 100%; padding: 0 2px; border: 1px solid #a5a7ab; background: #fff; color: #999; }
.spin input::-webkit-inner-spin-button { appearance: none; }
.spin::before, .spin::after { content: ""; position: absolute; right: 5px; border: 3px solid transparent; }
.spin::before { top: 5px; border-bottom-color: #222; border-top: 0; }
.spin::after { bottom: 5px; border-top-color: #222; border-bottom: 0; }

.work { display: flex; flex: 1; min-height: 0; }
.strip { display: flex; flex: none; justify-content: flex-end; height: 12px; background: #d4d5da; border-bottom: 1px solid #c4c6cc; }
.close { width: 16px; height: 12px; font-size: 14px; line-height: 12px; color: #777; }

.nav { display: flex; flex: none; flex-direction: column; width: 211px; border: 1px solid #c4c6cc; border-top: 0; background: #fff; }
.nav-title { flex: none; height: 22px; padding: 3px 8px; background: #efefef; border-bottom: 1px solid #c4c6cc; color: #777; }
.nav-tools { display: flex; flex: none; align-items: center; gap: 4px; height: 28px; padding: 0 1px 0 5px; background: #efefef; border-bottom: 1px solid #c4c6cc; }
.nav-tools .plain { margin-right: auto; }
.view { display: flex; align-items: center; justify-content: center; width: 24px; height: 23px; border: 1px solid #3f9bf0; border-radius: 3px; background: #e9f3fd; }
.tree { display: flex; flex-direction: column; padding-top: 3px; }
.tree li { display: flex; flex: none; align-items: center; gap: 5px; height: 24px; padding-left: 2px; white-space: nowrap; }
.tree .child { gap: 6px; width: 94px; height: 21px; margin: 1px 0 2px 40px; padding-left: 3px; }
.tree .current { background: #c8d8ef; }

.middle { display: flex; flex: none; flex-direction: column; gap: 4px; width: 316px; margin-left: 4px; }
.pane { display: flex; flex-direction: column; border: 1px solid #c4c6cc; border-top: 0; background: #efefef; }
.parts { flex: none; height: 286px; border-color: #abadb3; }
.props { flex: 1; min-height: 0; border-bottom: 0; }
.tabs { display: flex; flex: none; height: 23px; border-bottom: 1px solid #c4c6cc; }
.tab { width: 65px; height: 22px; padding-top: 1px; background: #dfdfdf; border-right: 1px solid #c4c6cc; color: #777; }
.tab.on { background: #efefef; color: #222; }
.part-tools { display: flex; flex: none; align-items: center; gap: 9px; height: 28px; padding: 1px 0 0 6px; border-bottom: 1px solid #c4c6cc; }
.part-tools button { display: flex; align-items: center; gap: 3px; }
.part-tools .caret { margin-left: 2px; border-width: 4px 3px 0; }
.part-tools .more { margin-left: 3px; }
.more svg { width: 9px; height: 7px; }
.search { display: flex; flex: none; align-items: center; height: 19px; padding-right: 7px; background: #fff; border-bottom: 1px solid #c4c6cc; }
.search input { flex: 1; min-width: 0; height: 18px; padding: 0 2px; border: 0; background: none; outline: 0; }
.search input::placeholder { color: #888; }
.lens { width: 11px; height: 11px; }
.part-tree { flex: 1; padding-top: 3px; background: #fff; }
.part-tree li { display: flex; align-items: center; height: 24px; padding-left: 10px; gap: 6px; }
.tri { width: 7px; height: 7px; }
.part-tree .leaf { padding-left: 40px; font-size: 13px; }
.leaf span { padding: 2px 3px 3px; }
.leaf .picked { background: #b1cbed; }

.prop-body { flex: 1; min-height: 0; background: linear-gradient(90deg, #efefef 21px, #fff 21px); border-bottom: 1px solid #c4c6cc; }
table { width: 100%; table-layout: fixed; border-collapse: separate; border-spacing: 0; }
th, td { height: 21px; padding: 1px 0 0 3px; border: solid #d2d2d2; border-width: 0 1px 1px 0; font-weight: 400; text-align: left; white-space: nowrap; overflow: hidden; line-height: 18px; background: #fff; }
th { padding: 1px 0 0; text-align: center; background: #efefef; color: #333; border-color: #c4c6cc; }
.c-no { width: 22px; }
.c-name { width: 101px; }
.c-val { width: 149px; background: #80bbfb; color: #fff; font-weight: 700; }
.link { color: #1a5ff2; }
.off { background: #eaeaea; color: #8c8c8c; }
.tick { padding: 0 2px 0 0; text-align: center; }
.tick .box { display: block; margin: 0 auto; }
.active th { background: #80bbfb; color: #fff; font-weight: 700; }
.edit { padding: 0; }
.editor { display: flex; align-items: center; height: 20px; padding-right: 3px; border: 1px solid #5b9fe6; }
.editor input { flex: 1; min-width: 0; height: 18px; padding: 1px 5px 0; border: 0; background: none; }
.editor button { display: flex; align-items: center; justify-content: center; gap: 2px; width: 16px; height: 12px; border: 1px solid #5b9fe6; border-radius: 2px; background: #eaf3fd; }
.editor i { width: 2px; height: 2px; background: #3f86d4; }
.group { padding: 0 0 0 2px; }
.exp { width: 13px; height: 13px; margin-right: 6px; border: 1px solid #858585; border-radius: 2px; background: linear-gradient(#333, #333) center / 5px 1px no-repeat, linear-gradient(#333, #333) center / 1px 5px no-repeat, #fff; vertical-align: middle; }
.prop-foot { flex: none; height: 30px; padding: 3px 5px; }
.prop-foot button { width: 80px; height: 25px; border: 1px solid #c4c6cc; border-radius: 3px; background: #fff; }

.splitter { display: flex; flex: none; align-items: center; width: 4px; }
.splitter button { display: flex; align-items: center; justify-content: flex-end; width: 4px; height: 100px; background: #67717b; }
.splitter svg { width: 3px; height: 6px; }

.viewport { position: relative; flex: 1; min-width: 0; background: #000; overflow: hidden; }
.scene { display: block; width: 100%; height: 100%; }
.cad-text { font-family: "Noto Sans CJK SC", sans-serif; font-size: 16px; fill: #fff; text-anchor: middle; }
.big { font-size: 18px; }
.axis { font-size: 15px; }
.axis text[fill="#00f"] { fill: #00f; }
.axis text[fill="#f00"] { fill: #f00; }
.axis text[fill="#0f0"] { fill: #0f0; }

.dialog { position: absolute; left: 474px; right: 0; top: 107px; bottom: 269px; display: flex; flex-direction: column; background: #fff; border-bottom: 1px solid #b9bfd0; border-left: 1px solid #b9c2d0; color: #333; }
.dlg-title { flex: none; height: 27px; padding: 6px 8px; background: #2b7de1; color: #fff; }
.bar { display: flex; flex: none; align-items: center; gap: 3px; height: 28px; padding: 1px 0 0 4px; border: solid #c4c6cc; border-width: 1px 0 1px 1px; overflow: hidden; }
.bar button { display: flex; flex: none; align-items: center; gap: 4px; height: 21px; padding: 0 4px; border-radius: 3px; }
.bar button:has(.caret) { padding-right: 0; }
.bar .caret { margin-right: 1px; border-width: 4px 3px 0; }
.bar button:disabled { color: #a8a8a8; }
.bar .sep { flex: none; width: 1px; height: 18px; margin: 0 1px; background: #d0d0d0; }
.bar-end { flex: none; width: 2px; height: 28px; background: #c4c6cc; }
.grip { flex: none; width: 2px; height: 14px; background: repeating-linear-gradient(#000 0 2px, transparent 2px 4px); }
.dlg-body { display: flex; flex: 1; min-height: 0; }
.tools { display: flex; flex: none; flex-direction: column; gap: 5px; width: 44px; padding: 7px 0 0 3px; border: solid #c4c6cc; border-width: 0 1px 1px 1px; }
.tools button { display: flex; align-items: center; justify-content: center; width: 27px; height: 22px; border: 1px solid transparent; border-radius: 3px; }
.tools .on { border-color: #3f9bf0; background: #e9f3fd; }
.tools .wide { width: 36px; gap: 6px; }
.tools .caret { border-width: 3px 3px 0; }
.grip-h { width: 26px; height: 2px; margin-left: 4px; background: repeating-linear-gradient(90deg, #000 0 2px, transparent 2px 4px); }
.sketch { position: relative; flex: 1; min-width: 0; background: #000; }
.coords { position: absolute; left: 36px; top: 255px; display: flex; gap: 9px; font-size: 13px; }
.coords input { width: 63px; height: 19px; padding: 0 2px; border: 0; background: #969696; color: #111; display: block; }
.coord-x { width: 63px; height: 19px; background: #fff; padding: 1px 2px; }
.coords .chosen { width: 34px; height: 17px; padding: 0; background: #0078d7; color: #fff; }
.dlg-status { display: flex; flex: none; align-items: center; gap: 6px; height: 42px; padding-left: 2px; }
.pos { width: 150px; font-size: 13px; }
.zero { width: 60px; font-size: 13px; }
.dlg-status button, .status button { display: flex; flex: none; align-items: center; justify-content: center; gap: 5px; width: 25px; height: 25px; border: 1px solid #2f8fe8; }
.dlg-status button:has(.caret), .status button:has(.caret) { width: 36px; }
.dlg-status .caret, .status .caret { border-width: 4px 3px 0; }
.dlg-status .pressed { border-color: #999; background: #cfcfcf; }

.status { display: flex; flex: none; align-items: flex-start; gap: 4px; height: 17px; padding: 3px 0 0 103px; background: #dcdcdf; overflow: hidden; color: #333; white-space: nowrap; }
.status span { padding-top: 5px; }
.status button { border-color: #999; background: #cfcfcf; }
.status .on { border-color: #2f8fe8; background: #fff; }
.status .txt { width: auto; padding: 0 5px; }
.status .st-pos { width: 158px; font-size: 13px; }
.st-floor { width: 79px; }
.st-elev { width: 129px; }
.st-zero { width: 98px; }
.st-hide { width: 100px; }

.ime { position: absolute; left: 3px; bottom: 0; width: 104px; height: 29px; overflow: hidden; background: #046804; border: solid #024802; border-width: 1px 1px 0; border-radius: 3px 3px 0 0; color: #fff; white-space: nowrap; }
.ime-row { display: flex; align-items: center; gap: 5px; height: 20px; padding-left: 3px; border-bottom: 1px solid #1b9a1b; }
.ime-name { flex: none; padding: 0 2px; background: #0a8a0a; color: #ffff90; line-height: 18px; }
.ime-ic { width: 10px; height: 10px; flex: none; }
.ime-low { height: 18px; gap: 4px; }
.ime-set { font-size: 10px; }
.ime-kb { width: 18px; height: 10px; flex: none; }
```
